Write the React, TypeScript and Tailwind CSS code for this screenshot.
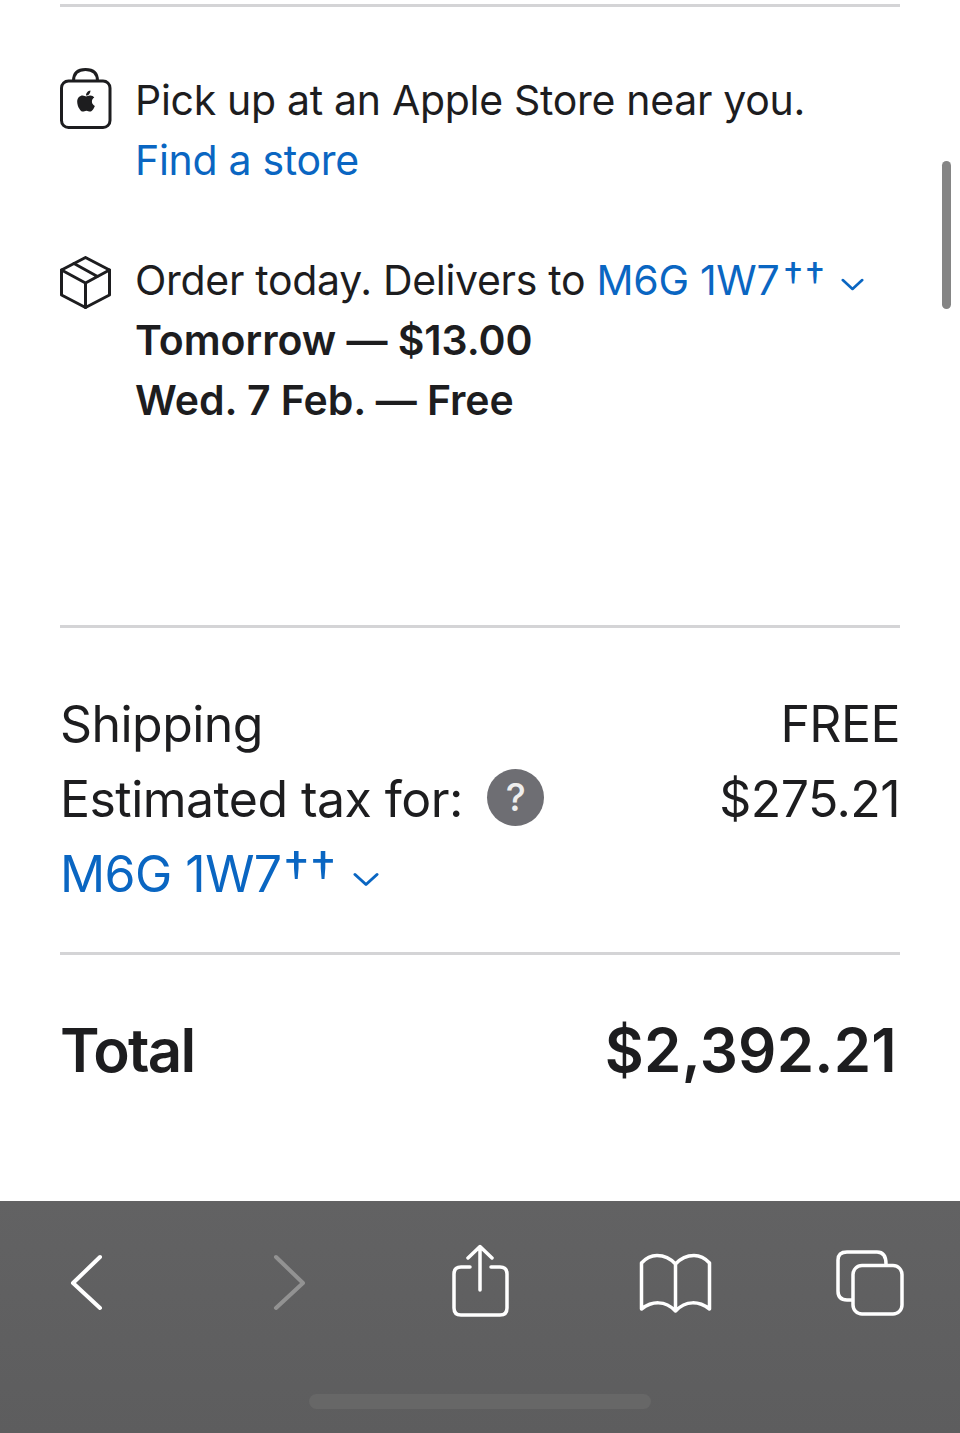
import React from "react";
import { FaApple } from "react-icons/fa";

function Chevron({ className }: { className: string }) {
  return (
    <svg viewBox="0 0 26 16" className={className} fill="none" stroke="#0a66c2" strokeWidth="3" strokeLinecap="round" strokeLinejoin="round">
      <path d="M2 3 L13 13 L24 3" />
    </svg>
  );
}

function Bag() {
  return (
    <svg viewBox="60 68 52 62" className="w-[52px] h-[62px] shrink-0 mt-[-2px]" fill="none" stroke="#1d1d1f" strokeWidth="3">
      <rect x="61.5" y="81" width="48.5" height="46.5" rx="7" />
      <path d="M73.5 81 C73.5 73 78 69.5 85.5 69.5 C93 69.5 97.5 73 97.5 81" />
    </svg>
  );
}

function Box() {
  return (
    <svg viewBox="60 256 52 54" className="w-[52px] h-[54px] shrink-0 mt-[6px]" fill="none" stroke="#1d1d1f" strokeWidth="3" strokeLinejoin="round" strokeLinecap="round">
      <path d="M85.5 257.5 L109.5 270 L109.5 295 L85.5 307.5 L61.5 295 L61.5 270 Z" />
      <path d="M61.5 270 L85.5 283 L109.5 270 M85.5 283 L85.5 307.5 M74 263.5 L97.5 276.5" />
    </svg>
  );
}

export default function App() {
  return (
    <div className="w-[960px] h-[1433px] bg-white overflow-hidden relative flex flex-col font-['Inter',sans-serif] text-[#1d1d1f]">
      <div className="h-[1201px] px-[60px] pt-[4px] shrink-0">
        <div className="h-[3px] bg-[#d4d4d6]" />
        <div className="mt-[63px] flex text-[41px] leading-[60px] tracking-[-0.3px]">
          <div className="relative">
            <Bag />
            <FaApple className="absolute left-[14px] top-[19px] text-[24px] text-[#1d1d1f]" />
          </div>
          <div className="ml-[23px]">
            <div>Pick up at an Apple Store near you.</div>
            <div className="text-[#0a66c2]">Find a store</div>
          </div>
        </div>
        <div className="mt-[60px] flex text-[41px] leading-[60px] tracking-[-0.3px]">
          <Box />
          <div className="ml-[23px]">
            <div className="flex items-center">
              <span>Order today. Delivers to&nbsp;</span>
              <span className="text-[#0a66c2]">M6G 1W7<sup className="ml-[4px] text-[40px] tracking-[2px] top-[-4px] leading-[0] align-baseline relative">††</sup></span>
              <Chevron className="w-[23px] h-[15px] ml-[14px] mt-[8px]" />
            </div>
            <div className="font-semibold tracking-[-0.05px]">Tomorrow — $13.00</div>
            <div className="font-semibold tracking-[-0.05px]">Wed. 7 Feb. — Free</div>
          </div>
        </div>
        <div className="mt-[195px] h-[3px] bg-[#d4d4d6]" />
        <div className="mt-[59px] text-[50px] leading-[75px] tracking-[-0.55px]">
          <div className="flex justify-between">
            <span>Shipping</span>
            <span>FREE</span>
          </div>
          <div className="flex justify-between">
            <span className="flex items-center">
              Estimated tax for:
              <span className="ml-[24px] mt-[-4px] w-[57px] h-[57px] rounded-full bg-[#6e6e73] text-[#eeeeee] text-[38px] font-medium leading-[57px] text-center">?</span>
            </span>
            <span>$275.21</span>
          </div>
          <div className="flex items-center text-[#0a66c2]">
            <span>M6G 1W7<sup className="ml-[2px] text-[52px] tracking-[1px] top-[-3px] leading-[0] align-baseline relative">††</sup></span>
            <Chevron className="w-[26px] h-[17px] ml-[16px] mt-[10px]" />
          </div>
        </div>
        <div className="mt-[40px] h-[3px] bg-[#d4d4d6]" />
        <div className="mt-[59px] pr-[3px] flex justify-between text-[60px] leading-[72px] font-semibold">
          <span className="tracking-[-1.7px]">Total</span>
          <span className="tracking-[0.25px]">$2,392.21</span>
        </div>
      </div>

      <div className="flex-1 bg-gradient-to-b from-[#626263] to-[#5d5d5e] relative pt-[43px]">
        <div className="flex items-start">
          <svg viewBox="70 1244 33 76" className="w-[33px] h-[76px] ml-[70px]" fill="none" stroke="#ffffff" strokeWidth="4" strokeLinecap="round" strokeLinejoin="round">
            <path d="M100 1257 L73 1283 L100 1308" />
          </svg>
          <svg viewBox="272 1244 33 76" className="w-[33px] h-[76px] ml-[169px]" fill="none" stroke="#929292" strokeWidth="4" strokeLinecap="round" strokeLinejoin="round">
            <path d="M276 1257 L303 1283 L276 1308" />
          </svg>
          <svg viewBox="450 1244 61 76" className="w-[61px] h-[76px] ml-[145px]" fill="none" stroke="#ffffff" strokeWidth="3.5" strokeLinecap="round" strokeLinejoin="round">
            <path d="M480 1290 L480 1247 M468 1258 L480 1246.5 L492 1258" />
            <path d="M470 1267 L461 1267 Q454 1267 454 1274 L454 1308 Q454 1315 461 1315 L500 1315 Q507 1315 507 1308 L507 1274 Q507 1267 500 1267 L491 1267" />
          </svg>
          <svg viewBox="638 1244 75 76" className="w-[75px] h-[76px] ml-[127px]" fill="none" stroke="#ffffff" strokeWidth="3.5" strokeLinecap="round" strokeLinejoin="round">
            <path d="M675.5 1311 L675.5 1264 C670 1258 664 1255.5 657 1255.5 C651 1255.5 646 1258 641.5 1263 L641.5 1309 C652 1301 665 1300 675.5 1311 C686 1300 699 1301 709.5 1309 L709.5 1263 C705 1258 700 1255.5 694 1255.5 C687 1255.5 681 1258 675.5 1264" />
          </svg>
          <svg viewBox="834 1244 71 76" className="w-[71px] h-[76px] ml-[121px]" fill="none" stroke="#ffffff" strokeWidth="3.5" strokeLinecap="round" strokeLinejoin="round">
            <path d="M852 1300 L847 1300 Q838 1300 838 1291 L838 1260 Q838 1252 847 1252 L877 1252 Q886 1252 886 1264" />
            <rect x="853" y="1265.5" width="49" height="48.5" rx="9" />
          </svg>
        </div>
        <div className="absolute left-[309px] top-[193px] w-[342px] h-[15px] rounded-full bg-[#676767]" />
      </div>

      <div className="absolute left-[942px] top-[161px] w-[9px] h-[148px] rounded-full bg-[#858585]" />
    </div>
  );
}
